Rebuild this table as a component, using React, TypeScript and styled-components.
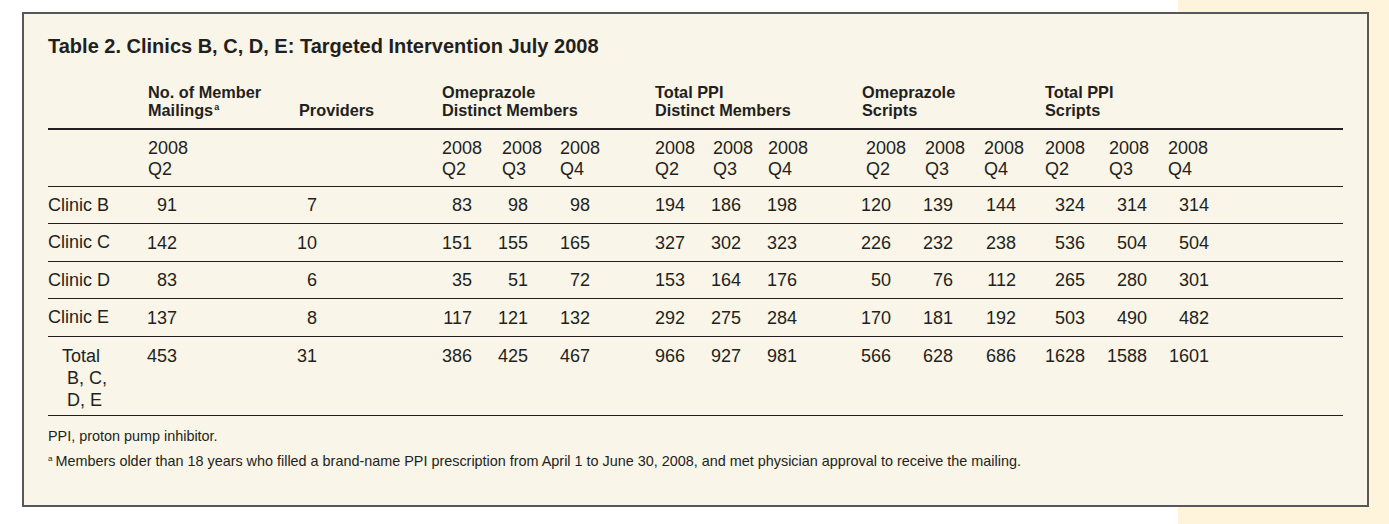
import React from 'react';
import styled, { createGlobalStyle } from 'styled-components';

const GRID = '100px 151px 143px 60px 58px 95px 58px 55px 94px 63px 59px 61px 64px 59px 1fr';
const INK = '#231f20';

const GlobalStyle = createGlobalStyle`
  html, body {
    margin: 0;
    padding: 0;
  }

  body {
    min-height: 524px;
    background: linear-gradient(to right, #ffffff 1178px, #fef4dc 1178px);
    font-family: "Liberation Sans", Arial, Helvetica, sans-serif;
    color: ${INK};
  }
`;

const Page = styled.div`
  padding: 12px 0 0 22px;
`;

const Panel = styled.section`
  box-sizing: border-box;
  width: 1347px;
  border: 2px solid #58585a;
  background-color: #f9f5e8;
  padding: 20px 24px 35px;
`;

const Title = styled.h2`
  margin: 0 0 25px;
  font-size: 20px;
  line-height: 24px;
  font-weight: 700;
`;

const Row = styled.div<{ $rule: 'thick' | 'thin'; $pad: string; $align?: string; $height?: string }>`
  display: grid;
  grid-template-columns: ${GRID};
  align-items: ${({ $align }) => $align || 'center'};
  padding: ${({ $pad }) => $pad};
  min-height: ${({ $height }) => $height || 'auto'};
  box-sizing: border-box;
  border-bottom: ${({ $rule }) => ($rule === 'thick' ? '2px' : '1.5px')} solid ${INK};
`;

const GroupHead = styled.div<{ $span?: number }>`
  grid-column: span ${({ $span }) => $span || 1};
  align-self: end;
  font-size: 16.3px;
  line-height: 18px;
  font-weight: 700;
  white-space: nowrap;
`;

const Sup = styled.sup`
  font-size: 9px;
  line-height: 0;
  vertical-align: 6px;
  margin-left: 1px;
`;

const SubHead = styled.div<{ $offset?: number }>`
  padding-left: ${({ $offset }) => $offset || 0}px;
  font-size: 18px;
  line-height: 21px;
  white-space: nowrap;
`;

const Label = styled.div<{ $hang?: boolean }>`
  font-size: 18px;
  line-height: ${({ $hang }) => ($hang ? '22px' : '21px')};
  padding-left: ${({ $hang }) => ($hang ? '19px' : '0')};
  text-indent: ${({ $hang }) => ($hang ? '-5px' : '0')};
  white-space: nowrap;
`;

const Value = styled.div<{ $width: number }>`
  display: flex;
  justify-content: flex-end;
  width: ${({ $width }) => $width}px;
  font-size: 18px;
  line-height: 22px;
  white-space: nowrap;
`;

const Note = styled.p`
  margin: 0;
  font-size: 14.4px;
  line-height: 18px;
  white-space: nowrap;

  & + & {
    margin-top: 7px;
  }
`;

const NotesBlock = styled.div`
  margin-top: 11px;
`;

const NoteSup = styled.sup`
  font-size: 8px;
  line-height: 0;
  vertical-align: 5px;
  margin-right: 3px;
`;

// width of each value cell (col start -> right edge of numbers), and sub-header nudge
const columns: { width: number; sub?: number; quarter?: string }[] = [
  { width: 29, quarter: 'Q2' },
  { width: 18 },
  { width: 30, quarter: 'Q2' },
  { width: 26, quarter: 'Q3' },
  { width: 30, quarter: 'Q4' },
  { width: 30, quarter: 'Q2' },
  { width: 28, quarter: 'Q3' },
  { width: 29, quarter: 'Q4' },
  { width: 29, quarter: 'Q2', sub: 4 },
  { width: 28, quarter: 'Q3' },
  { width: 32, quarter: 'Q4' },
  { width: 40, quarter: 'Q2' },
  { width: 38, quarter: 'Q3' },
  { width: 41, quarter: 'Q4' },
];

const clinics = [
  { name: 'Clinic B', values: [91, 7, 83, 98, 98, 194, 186, 198, 120, 139, 144, 324, 314, 314] },
  { name: 'Clinic C', values: [142, 10, 151, 155, 165, 327, 302, 323, 226, 232, 238, 536, 504, 504] },
  { name: 'Clinic D', values: [83, 6, 35, 51, 72, 153, 164, 176, 50, 76, 112, 265, 280, 301] },
  { name: 'Clinic E', values: [137, 8, 117, 121, 132, 292, 275, 284, 170, 181, 192, 503, 490, 482] },
];

const totals = [453, 31, 386, 425, 467, 966, 927, 981, 566, 628, 686, 1628, 1588, 1601];

const App: React.FC = () => (
  <>
    <GlobalStyle />
    <Page>
      <Panel>
        <Title>Table 2. Clinics B, C, D, E: Targeted Intervention July 2008</Title>

        <Row $rule="thick" $pad="0 0 8.5px" $align="end">
          <div />
          <GroupHead>
            No. of Member
            <br />
            Mailings<Sup>a</Sup>
          </GroupHead>
          <GroupHead>Providers</GroupHead>
          <GroupHead $span={3}>
            Omeprazole
            <br />
            Distinct Members
          </GroupHead>
          <GroupHead $span={3}>
            Total PPI
            <br />
            Distinct Members
          </GroupHead>
          <GroupHead $span={3}>
            Omeprazole
            <br />
            Scripts
          </GroupHead>
          <GroupHead $span={3}>
            Total PPI
            <br />
            Scripts
          </GroupHead>
        </Row>

        <Row $rule="thin" $pad="8.4px 0 6.1px" $align="start">
          <div />
          {columns.map((col, i) => (
            <SubHead key={i} $offset={col.sub}>
              {col.quarter ? (
                <>
                  2008
                  <br />
                  {col.quarter}
                </>
              ) : null}
            </SubHead>
          ))}
        </Row>

        {clinics.map((clinic) => (
          <Row key={clinic.name} $rule="thin" $pad="0" $height="37.5px">
            <Label>{clinic.name}</Label>
            {clinic.values.map((v, i) => (
              <Value key={i} $width={columns[i].width}>{v}</Value>
            ))}
          </Row>
        ))}

        <Row $rule="thin" $pad="8.2px 0 3.5px" $align="start">
          <Label $hang>
            Total
            <br />
            B, C,
            <br />
            D, E
          </Label>
          {totals.map((v, i) => (
            <Value key={i} $width={columns[i].width}>{v}</Value>
          ))}
        </Row>

        <NotesBlock>
          <Note>PPI, proton pump inhibitor.</Note>
          <Note>
            <NoteSup>a</NoteSup>
            Members older than 18 years who filled a brand-name PPI prescription from April 1 to June 30, 2008, and met physician approval to receive the mailing.
          </Note>
        </NotesBlock>
      </Panel>
    </Page>
  </>
);

export default App;
